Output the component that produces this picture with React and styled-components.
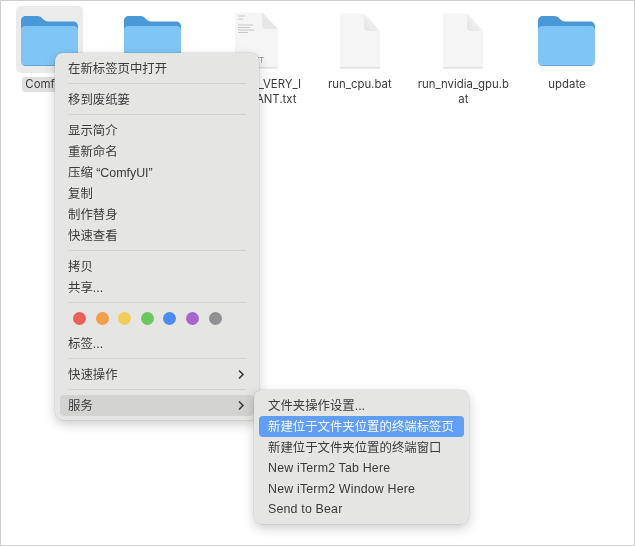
import React from "react"
import styled, { createGlobalStyle } from "styled-components"

const GlobalStyle = createGlobalStyle`
  html, body {
    margin: 0;
    padding: 0;
    background: #fff;
  }
  body {
    font-family: Inter, "Noto Sans CJK SC", sans-serif;
    -webkit-font-smoothing: antialiased;
  }
`

const Page = styled.div`
  position: relative;
  box-sizing: border-box;
  width: 635px;
  height: 546px;
  overflow: hidden;
  background: #fff;
  border: 1px solid #cfcfcf;
`

const Soft = styled.div`
  height: 100%;
  filter: blur(0.45px);
`

const FileRow = styled.div`
  display: flex;
  gap: 7.6px;
  padding-top: 5px;
`

const FileCell = styled.div`
  width: 96px;
  display: flex;
  flex-direction: column;
  align-items: center;
`

const Tile = styled.div`
  box-sizing: border-box;
  width: 67px;
  height: 67px;
  padding-top: 2px;
  display: flex;
  align-items: center;
  justify-content: center;
  border-radius: 5px;
  background: ${({ $selected }) => ($selected ? "#ebebeb" : "transparent")};
`

const FileName = styled.div`
  margin-top: 4px;
  padding: 0 ${({ $selected }) => ($selected ? "3px" : "0")};
  width: fit-content;
  max-width: 96px;
  font-size: 11.4px;
  line-height: 15px;
  text-align: center;
  word-break: break-all;
  color: #3c3c3c;
  border-radius: 3px;
  background: ${({ $selected }) => ($selected ? "#e0e0e0" : "transparent")};
`

const Menu = styled.div`
  position: absolute;
  box-sizing: border-box;
  left: ${({ $left }) => $left}px;
  top: ${({ $top }) => $top}px;
  width: ${({ $width }) => $width}px;
  padding: ${({ $padding }) => $padding};
  border-radius: 8px;
  background: #e5e5e4;
  box-shadow: 0 0 0 0.5px rgba(0, 0, 0, 0.12), 0 4px 12px rgba(0, 0, 0, 0.2);
  font-family: "Liberation Sans", "Noto Sans CJK SC", sans-serif;
`

const Row = styled.div`
  display: flex;
  align-items: center;
  justify-content: space-between;
  height: ${({ $compact }) => ($compact ? "20.8px" : "21px")};
  padding: 0 9px 0 ${({ $compact }) => ($compact ? "9px" : "8px")};
  border-radius: 4px;
  font-size: 12.4px;
  letter-spacing: ${({ $latin }) => ($latin ? "0.18px" : "0")};
  color: ${({ $active }) => ($active ? "#f4f8ff" : "#3b3b3b")};
  background: ${({ $active, $hover }) =>
    $active ? "#619ff6" : $hover ? "#d3d3d2" : "transparent"};
  margin-top: ${({ $gapTop }) => ($gapTop ? "3.5px" : "0")};
`

const Separator = styled.div`
  height: 1px;
  margin: 4.5px 8px;
  background: #d2d2d1;
`

const DotRow = styled.div`
  display: flex;
  align-items: center;
  gap: 9.6px;
  height: 22px;
  padding-left: 13px;
`

const Dot = styled.span`
  width: 13px;
  height: 13px;
  border-radius: 50%;
  background: ${({ $color }) => $color};
`

const Chevron = () => (
  <svg width="8" height="11" viewBox="0 0 8 11" fill="none">
    <path d="M2 1.500 6 5.500 2 9.500" stroke="#3b3b3b" strokeWidth="1.6" />
  </svg>
)

const FolderIcon = () => (
  <svg width="57" height="50" viewBox="0 0 57 50">
    <path
      d="M0 5C0 2 2 0 5 0h11c3 0 4 1 6 3 1.500 1.500 3 2.500 5 2.500H52c3 0 5 2 5 5V20H0Z"
      fill="#4a98d6"
    />
    <path
      d="M0 14C0 11.500 2 10 4.500 10h48c2.500 0 4.500 1.500 4.500 4V44c0 3-2 5-5 5H5c-3 0-5-2-5-5Z"
      fill="#7fc6f6"
    />
    <path d="M0 44c0 3 2 5 5 5h47c3 0 5-2 5-5v1c0 3-2 5-5 5H5c-3 0-5-2-5-5Z" fill="#5ea6dc" />
  </svg>
)

const BlankDoc = () => (
  <svg width="42" height="56" viewBox="0 0 42 56">
    <defs>
      <linearGradient id="fold" x1="1" y1="0" x2="0" y2="1">
        <stop offset="0" stopColor="#fbfbfb" />
        <stop offset="1" stopColor="#e3e3e3" />
      </linearGradient>
    </defs>
    <path d="M1 2c0-1 .5-1.500 1.500-1.500H25L41 18v35.500c0 1-.5 1.500-1.500 1.500h-37C1.500 55 1 54.500 1 53.500Z" fill="#f5f5f5" />
    <path d="M1 54h40v.6c0 .6-.5 1-1.500 1h-37c-1 0-1.500-.4-1.500-1Z" fill="#dedede" />
    <path d="M25 .5 41 18H29c-2.500 0-4-1.500-4-4Z" fill="url(#fold)" />
  </svg>
)

const TextDoc = () => (
  <svg width="45" height="57" viewBox="0 0 45 57">
    <path d="M1 2c0-1 .5-1.500 1.500-1.500H28L44 17v37.500c0 1-.5 1.500-1.500 1.500h-40C1.500 56 1 55.500 1 54.500Z" fill="#f5f5f5" />
    <path d="M1 55h43v.6c0 .6-.5 1-1.500 1h-40c-1 0-1.500-.4-1.500-1Z" fill="#dedede" />
    <path d="M28 .5 44 17H32c-2.500 0-4-1.500-4-4Z" fill="#e6e6e6" />
    <path
      d="M4 4h7M4 7h5M4 13h15M4 15.500h12M4 18h16M4 20.500h10"
      stroke="#b5b5b5"
      strokeWidth=".7"
    />
    <text x="22.500" y="51" fontSize="8" textAnchor="middle" fill="#8b8b8b" fontFamily="Inter, sans-serif">
      TXT
    </text>
  </svg>
)

const files = [
  { icon: <FolderIcon />, name: "ComfyUI", selected: true },
  { icon: <FolderIcon /> },
  { icon: <TextDoc />, name: "README_VERY_IMPORTANT.txt" },
  { icon: <BlankDoc />, name: "run_cpu.bat" },
  { icon: <BlankDoc />, name: "run_nvidia_gpu.bat" },
  { icon: <FolderIcon />, name: "update" },
]

const dots = ["#ec5f57", "#f0a04b", "#f4cc5a", "#6cc65f", "#4a8cf2", "#a665cf", "#919193"]

const services = [
  { label: "文件夹操作设置..." },
  { label: "新建位于文件夹位置的终端标签页", active: true },
  { label: "新建位于文件夹位置的终端窗口" },
  { label: "New iTerm2 Tab Here", latin: true },
  { label: "New iTerm2 Window Here", latin: true },
  { label: "Send to Bear", latin: true },
]

const App = () => (
  <Page>
    <GlobalStyle />
    <Soft>
      <FileRow>
        {files.map((file, i) => (
          <FileCell key={i}>
            <Tile $selected={file.selected}>{file.icon}</Tile>
            {file.name && <FileName $selected={file.selected}>{file.name}</FileName>}
          </FileCell>
        ))}
      </FileRow>

      <Menu $left={54} $top={52} $width={204} $padding="4px 5px">
        <Row>在新标签页中打开</Row>
        <Separator />
        <Row>移到废纸篓</Row>
        <Separator />
        <Row>显示简介</Row>
        <Row>重新命名</Row>
        <Row>压缩 “ComfyUI”</Row>
        <Row>复制</Row>
        <Row>制作替身</Row>
        <Row>快速查看</Row>
        <Separator />
        <Row>拷贝</Row>
        <Row>共享...</Row>
        <Separator />
        <DotRow>
          {dots.map((color) => (
            <Dot key={color} $color={color} />
          ))}
        </DotRow>
        <Row $gapTop>标签...</Row>
        <Separator />
        <Row>
          快速操作
          <Chevron />
        </Row>
        <Separator />
        <Row $hover>
          服务
          <Chevron />
        </Row>
      </Menu>

      <Menu $left={253} $top={389} $width={215} $padding="5px 5px 4px">
        {services.map((item) => (
          <Row key={item.label} $compact $active={item.active} $latin={item.latin}>
            {item.label}
          </Row>
        ))}
      </Menu>
    </Soft>
  </Page>
)

export default App
